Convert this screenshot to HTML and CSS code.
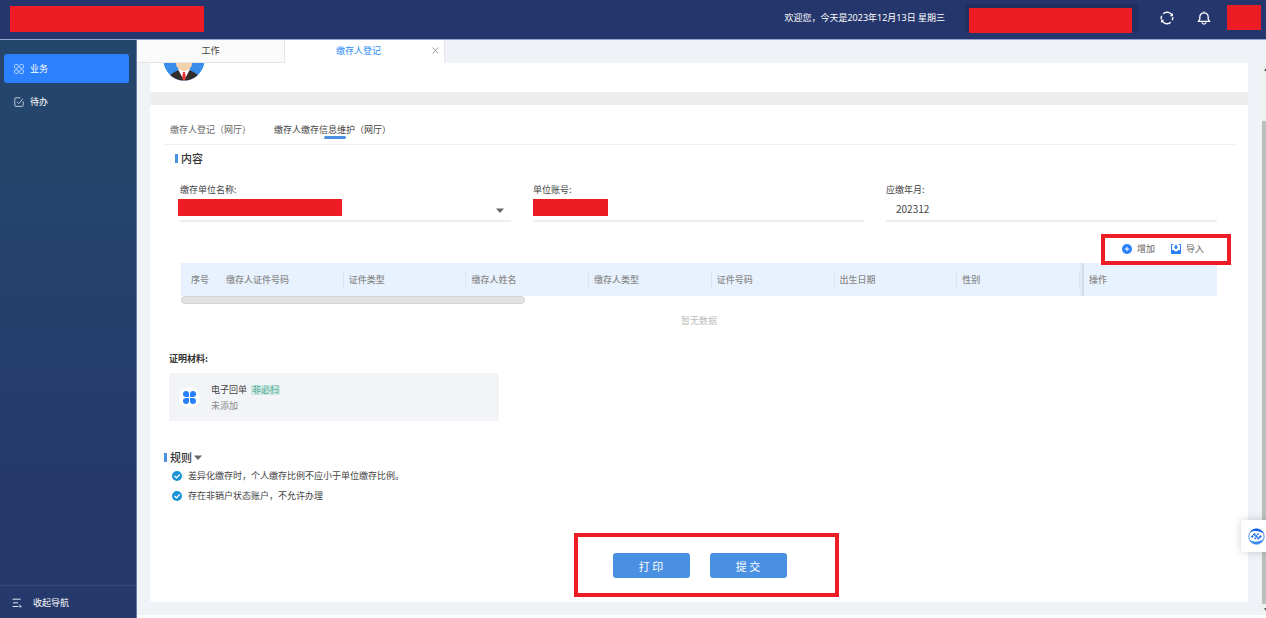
FILE: index.html
```html
<!DOCTYPE html>
<html lang="zh-CN">
<head>
<meta charset="utf-8">
<title>缴存人登记</title>
<link rel="stylesheet" href="styles.css">
</head>
<body>
<header class="topbar">
  <span class="mask mask-logo"></span>
  <span class="welcome">欢迎您，今天是2023年12月13日 星期三</span>
  <span class="org"><span class="mask mask-org"></span></span>
  <button class="icon-btn refresh" type="button" aria-label="刷新">
    <svg width="14" height="14" viewBox="0 0 14 14" fill="none" stroke="#fff" stroke-width="1.4"><path d="M1.300 8.400A5.700 5.700 0 0 1 1.700 4.800M3.200 2.700A5.700 5.700 0 0 1 12.300 4.900M12.700 6.200A5.700 5.700 0 0 1 12.200 9.300M10.800 11.300A5.700 5.700 0 0 1 1.700 9.100"/><path d="M10.200 4.800h2.300V2.500M3.800 9.200H1.500v2.300" stroke-width="1"/></svg>
  </button>
  <button class="icon-btn bell" type="button" aria-label="通知">
    <svg width="14" height="14" viewBox="0 0 14 14" fill="none" stroke="#fff" stroke-width="1.3" stroke-linejoin="round"><path d="M7 .4v1.400M1.200 10.400h11.600L11.200 8.400V6A4.200 4.200 0 0 0 2.800 6v2.400z"/><path d="M4.800 11.400a2.300 2.300 0 0 0 4.400 0"/></svg>
  </button>
  <span class="mask mask-user"></span>
</header>
<div class="shell">
  <nav class="sidebar">
    <a class="nav-item active" href="#">
      <svg width="10" height="10" viewBox="0 0 10 10" fill="none" stroke="#b4d2ff" stroke-width="1"><rect x=".5" y=".5" width="3.700" height="3.700" rx="1"/><rect x="5.800" y=".5" width="3.700" height="3.700" rx="1"/><rect x=".5" y="5.800" width="3.700" height="3.700" rx="1"/><rect x="5.800" y="5.800" width="3.700" height="3.700" rx="1"/></svg>
      业务</a>
    <a class="nav-item" href="#">
      <svg width="10" height="10" viewBox="0 0 10 10" fill="none" stroke="#b7c6d6" stroke-width="1"><path d="M6.500.8H1.800a1 1 0 0 0-1 1v6.600a1 1 0 0 0 1 1h6.400a1 1 0 0 0 1-1V4.500"/><path d="M3 4.800l1.800 1.800L9 1.800"/></svg>
      待办</a>
    <a class="nav-collapse" href="#">
      <svg width="10" height="10" viewBox="0 0 10 10" fill="none" stroke="#dfe5f2"><path d="M.5 1.200h8M1 4.800h5M.5 8.500h6"/><path d="M7.500 6l2.300 3.200H7.500z" fill="#dfe5f2" stroke="none"/></svg>
      收起导航</a>
  </nav>
  <main class="main">
    <div class="page-tabs">
      <a class="page-tab" href="#">工作</a>
      <div class="page-tab current"><a href="#">缴存人登记</a><button class="tab-close" type="button" aria-label="关闭"><svg width="7" height="7" viewBox="0 0 7 7" stroke="#999" stroke-width="1"><path d="M.8.5l5.400 6M6.200.5l-5.400 6"/></svg></button></div>
    </div>
    <div class="viewport">
      <div class="content">
        <section class="profile">
          <svg class="avatar" width="42" height="18" viewBox="0 24 42 18">
            <defs><clipPath id="face"><circle cx="21" cy="21" r="20.500"/></clipPath></defs>
            <g clip-path="url(#face)">
              <rect width="42" height="42" fill="#3a8eea"/>
              <path d="M5 42c0-6 4-8 11-11h10c7 3 11 5 11 11z" fill="#332d2c"/>
              <path d="M15 30l6 12 6-12-3-2h-6z" fill="#fff"/>
              <path d="M13 20h16v6c-2 4-5 6-8 6s-6-2-8-6z" fill="#f3d3ae"/>
              <path d="M20 33h2l1 6-2 3-2-3z" fill="#e4393c"/>
            </g>
          </svg>
        </section>
        <section class="card">
          <div class="tabs">
            <a class="tab" href="#">缴存人登记（网厅）</a>
            <a class="tab selected" href="#">缴存人缴存信息维护（网厅）</a>
          </div>
          <h2 class="title title-content">内容</h2>
          <form class="fields">
            <div class="field">
              <label for="unit">缴存单位名称:</label>
              <div class="control">
                <select id="unit"><option></option></select>
                <svg class="caret" width="8" height="5" viewBox="0 0 8 5"><path d="M0 .5h8L4 5z" fill="#666"/></svg>
                <span class="mask mask-unit"></span>
              </div>
            </div>
            <div class="field">
              <label for="account">单位账号:</label>
              <div class="control"><input id="account" type="text"><span class="mask mask-account"></span></div>
            </div>
            <div class="field">
              <label for="month">应缴年月:</label>
              <div class="control"><input id="month" type="text" value="202312"></div>
            </div>
          </form>
          <div class="toolbar">
            <button type="button" class="tool"><svg width="10" height="10" viewBox="0 0 10 10"><circle cx="5" cy="5" r="5" fill="#2a7ffb"/><path d="M5 2.800v4.400M2.800 5h4.400" stroke="#fff"/></svg>增加</button>
            <button type="button" class="tool"><svg width="10" height="10" viewBox="0 0 10 10"><path d="M2.300 0H1a1 1 0 0 0-1 1v8a1 1 0 0 0 1 1h8a1 1 0 0 0 1-1V1a1 1 0 0 0-1-1H7.700v1H9v5H7.400L6.500 7.300h-3L2.600 6H1V1h1.300z" fill="#2a7ffb"/><path d="M4.200.8h1.600v2h1.600L5 5.400 2.600 2.800h1.600z" fill="#2a7ffb"/></svg>导入</button>
            <span class="ring ring-tools"></span>
          </div>
          <div class="grid">
            <table class="list">
              <colgroup><col class="col-no"><col><col><col><col><col><col><col><col class="col-op"></colgroup>
              <thead><tr><th class="plain">序号</th><th>缴存人证件号码</th><th>证件类型</th><th>缴存人姓名</th><th>缴存人类型</th><th>证件号码</th><th>出生日期</th><th>性别</th><th class="fixed">操作</th></tr></thead>
            </table>
            <div class="h-scroll"></div>
            <p class="empty">暂无数据</p>
          </div>
          <h3 class="files-title">证明材料:</h3>
          <div class="file">
            <span class="file-icon"><svg width="13" height="13" viewBox="0 0 13 13" fill="#2a7ffb"><path d="M3 0a3 3 0 0 1 3 3v3H3a3 3 0 0 1 0-6zM10 0a3 3 0 0 1 0 6H7V3a3 3 0 0 1 3-3zM3 7h3v3a3 3 0 1 1-3-3zM7 7h3a3 3 0 1 1-3 3z"/></svg></span>
            <div class="file-text">
              <div class="file-name">电子回单<span class="tag">非必扫</span></div>
              <div class="file-state">未添加</div>
            </div>
          </div>
          <h2 class="title title-rules">规则<svg width="8" height="5" viewBox="0 0 8 5"><path d="M0 .5h8L4 5z" fill="#666"/></svg></h2>
          <ul class="rules">
            <li><svg width="10" height="10" viewBox="0 0 10 10"><circle cx="5" cy="5" r="5" fill="#1b93d8"/><path d="M2.500 5l2 1.900 3.200-3.400" fill="none" stroke="#fff" stroke-width="1.300"/></svg>差异化缴存时，个人缴存比例不应小于单位缴存比例。</li>
            <li><svg width="10" height="10" viewBox="0 0 10 10"><circle cx="5" cy="5" r="5" fill="#1b93d8"/><path d="M2.500 5l2 1.900 3.200-3.400" fill="none" stroke="#fff" stroke-width="1.300"/></svg>存在非销户状态账户，不允许办理</li>
          </ul>
          <div class="actions">
            <div class="action-group">
              <button class="primary" type="button">打 印</button>
              <button class="primary" type="button">提 交</button>
              <span class="ring ring-actions"></span>
            </div>
          </div>
        </section>
      </div>
      <div class="v-scroll">
        <svg width="5" height="12" viewBox="0 0 5 12"><path d="M5 5v3H3z" fill="#555"/></svg>
        <span class="thumb"></span>
        <svg width="5" height="11" viewBox="0 0 5 11"><path d="M5 7V4H3z" fill="#555"/></svg>
      </div>
    </div>
  </main>
</div>
<button class="assistant" type="button" aria-label="助手">
  <svg width="17" height="17" viewBox="0 0 17 17" fill="none" stroke="#1f6fe5"><circle cx="8.500" cy="8.500" r="7.700" stroke-width=".8"/><path d="M1.800 4.500C5-.5 12-.5 15.800 5.500 12 2.800 6 2 1.800 4.500z" fill="#1260dc" stroke="none"/><path d="M1.500 11.800c3.800 2.700 9.300 2.400 14-.8-3 6.500-11 7-14 .8z" fill="#338af5" stroke="none"/><path d="M3.400 9.200l3.200-2.800 3.800 4 3-2.800" stroke-width="2" stroke-dasharray="2.300 .5"/><path d="M6.600 10.900l1.200-1M9.300 6.700l1.300-1" stroke-width="1.700"/></svg>
</button>
</body>
</html>
```
FILE: styles.css
```css
* { box-sizing: border-box; }
body {
  margin: 0;
  height: 100vh;
  display: flex;
  flex-direction: column;
  overflow: hidden;
  background: #fff;
  color: #444;
  font: 9px/14px "Noto Sans CJK SC", sans-serif;
}
a { color: inherit; text-decoration: none; }
h2, h3, p, ul { margin: 0; padding: 0; }
button, input, select { font: inherit; color: inherit; border: 0; background: none; padding: 0; margin: 0; }
button { cursor: pointer; }
svg { display: block; flex: none; }

.mask { background: #ee1c25; flex: none; }

.topbar {
  display: flex;
  align-items: center;
  height: 40px;
  flex: none;
  padding: 0 5px 4px 10px;
  background: #25366d;
  border-bottom: 1px solid #9aa3cf;
  color: #fff;
}
.welcome { font-family: "Noto Sans", "Noto Sans CJK SC", sans-serif; }
.mask-logo { width: 194px; height: 26px; margin-right: auto; margin-top: 2px; }
.org { margin: 0 22px 0 20px; padding: 4px 6px 0 4px; background: #202f60; height: 28px; }
.mask-org { display: block; width: 163px; height: 25px; }
.icon-btn { width: 14px; height: 14px; margin-right: 23px; }
.bell { margin-right: 16px; }
.mask-user { width: 34px; height: 25px; }

.shell { flex: 1; display: flex; min-height: 0; }
.sidebar {
  width: 137px;
  flex: none;
  display: flex;
  flex-direction: column;
  padding-top: 14px;
  color: #fff;
  background: linear-gradient(#25466c, #25456c 20%, #25396d 75%, #25396d);
  border-right: 1px solid #6a7ba3;
}
.nav-item {
  display: flex;
  align-items: center;
  gap: 6px;
  height: 29px;
  margin: 0 7px 4px 4px;
  padding-left: 10px;
  border-radius: 3px;
}
.nav-item.active { background: #2a80fd; }
.nav-collapse {
  display: flex;
  align-items: center;
  gap: 11px;
  height: 33px;
  margin-top: auto;
  padding: 1px 0 0 12px;
  border-top: 1px solid #35497b;
}

.main { flex: 1; min-width: 0; display: flex; flex-direction: column; padding-bottom: 3px; }
.page-tabs { display: flex; height: 23px; flex: none; background: #eff3f8; }
.page-tab {
  position: relative;
  width: 148px;
  text-align: center;
  line-height: 21px;
  background: #fafafa;
  border-right: 1px solid #e6e6e6;
  border-bottom: 1px solid #e6e6e6;
}
.page-tab.current { width: 160px; padding-right: 12px; background: #fff; color: #2a8cf8; border-bottom-color: #fff; }
.tab-close { position: absolute; right: 5px; top: 7px; }

.viewport { flex: 1; min-height: 0; display: flex; background: #eff3f8; }
.content { flex: 1; min-width: 0; padding: 0 13px; display: flex; flex-direction: column; overflow: hidden; }
.profile { height: 42px; flex: none; padding-left: 13px; background: #fff; border-bottom: 13px solid #ededed; }
.card { flex: 1; margin-bottom: 13px; padding: 0 13px 0 14px; background: #fff; border-radius: 0 0 3px 3px; }

.tabs { display: flex; gap: 23px; height: 40px; padding: 18px 6px 0; border-bottom: 1px solid #f0f0f0; color: #666; }
.tab { position: relative; }
.tab.selected { color: #444; }
.tab.selected::after {
  content: "";
  position: absolute;
  left: 50px;
  bottom: 5px;
  width: 22px;
  height: 3px;
  border-radius: 2px;
  background: #4a90e2;
}

.title { display: flex; align-items: center; font-size: 11px; line-height: 16px; font-weight: 500; color: #333; }
.title::before { content: ""; width: 3px; height: 9px; margin-right: 3px; background: #4a90e2; }
.title svg { margin-left: 2px; }
.title-content { margin: 5px 0 0 11px; }
.title-rules { margin-top: 28px; }

.fields { display: grid; grid-template-columns: repeat(3, 1fr); gap: 22px; margin: 17px 18px 0 16px; }
.field label { display: block; }
.control { position: relative; height: 25px; border-bottom: 2px solid #eee; }
.control input, .control select { display: block; width: 100%; height: 23px; padding: 0 10px; appearance: none; font-size: 10px; outline: 0; }
.caret { position: absolute; right: 7px; top: 11px; }
.control .mask { position: absolute; top: 2px; height: 17px; }
.mask-unit { left: -2px; width: 164px; }
.mask-account { left: 0; width: 75px; }

.toolbar { position: relative; display: flex; justify-content: flex-end; gap: 16px; margin: 20px 18px 0 0; padding-right: 13px; }
.tool { display: flex; align-items: center; gap: 5px; height: 14px; color: #666; }
.ring { position: absolute; border: 4px solid #ee1c25; pointer-events: none; }
.ring-tools { right: -14px; top: -8px; width: 130px; height: 31px; }

.grid { margin: 7px 18px 0 17px; }
.list { width: 100%; table-layout: fixed; border-collapse: collapse; background: #e8f2fe; color: #8a8a8a; }
.col-no { width: 40px; }
.col-op { width: 137px; }
.list th {
  height: 33px;
  padding: 0 5px;
  text-align: left;
  font-weight: 500;
  background: linear-gradient(#dce5ee, #dce5ee) right center / 1px 16px no-repeat;
}
.list th.plain { padding-left: 10px; background: none; }
.list th.fixed { padding-left: 9px; background: linear-gradient(90deg, #e6f0fb, #cfdae6) left center / 4px 100% no-repeat; }
.h-scroll { width: 344px; height: 8px; border-radius: 4px; background: #e2e2e2; border: 1px solid #d3d3d3; }
.empty { padding-top: 10px; text-align: center; color: #bbb; }

.files-title { margin: 24px 0 7px 5px; font-size: 9px; line-height: 14px; color: #333; }
.file { display: flex; align-items: center; gap: 11px; width: 330px; height: 48px; margin-left: 5px; padding-left: 10px; background: #f3f4f8; }
.file-icon { display: flex; align-items: center; justify-content: center; width: 21px; height: 21px; border-radius: 50%; background: #fff; }
.file-text { padding-top: 2px; }
.file-name { display: flex; align-items: center; gap: 4px; line-height: 16px; }
.tag { padding: 0 1px; line-height: 10px; color: #4fae97; background: #cfe7e2; border-radius: 1px; }
.file-state { line-height: 16px; color: #888; }

.rules { list-style: none; padding: 1px 0 0 8px; }
.rules li { display: flex; align-items: center; gap: 6px; height: 20px; }

.actions { display: flex; justify-content: center; margin-top: 47px; }
.action-group { position: relative; display: flex; gap: 20px; }
.primary { width: 77px; height: 25px; border-radius: 3px; background: #4a90e2; color: #fff; font-size: 11px; }
.ring-actions { left: -39px; right: -52px; top: -20px; bottom: -19px; }

.v-scroll { width: 5px; display: flex; flex-direction: column; background: #f1f1f1; }
.thumb { flex: 1; margin: 46px 0 0 1px; background: #bdbdbd; }
.assistant {
  position: fixed;
  right: 0;
  bottom: 66px;
  width: 25px;
  height: 32px;
  padding-left: 7px;
  overflow: hidden;
  border-radius: 4px 0 0 4px;
  background: #fff;
  box-shadow: 0 0 8px rgba(0, 0, 0, .18);
}
```
